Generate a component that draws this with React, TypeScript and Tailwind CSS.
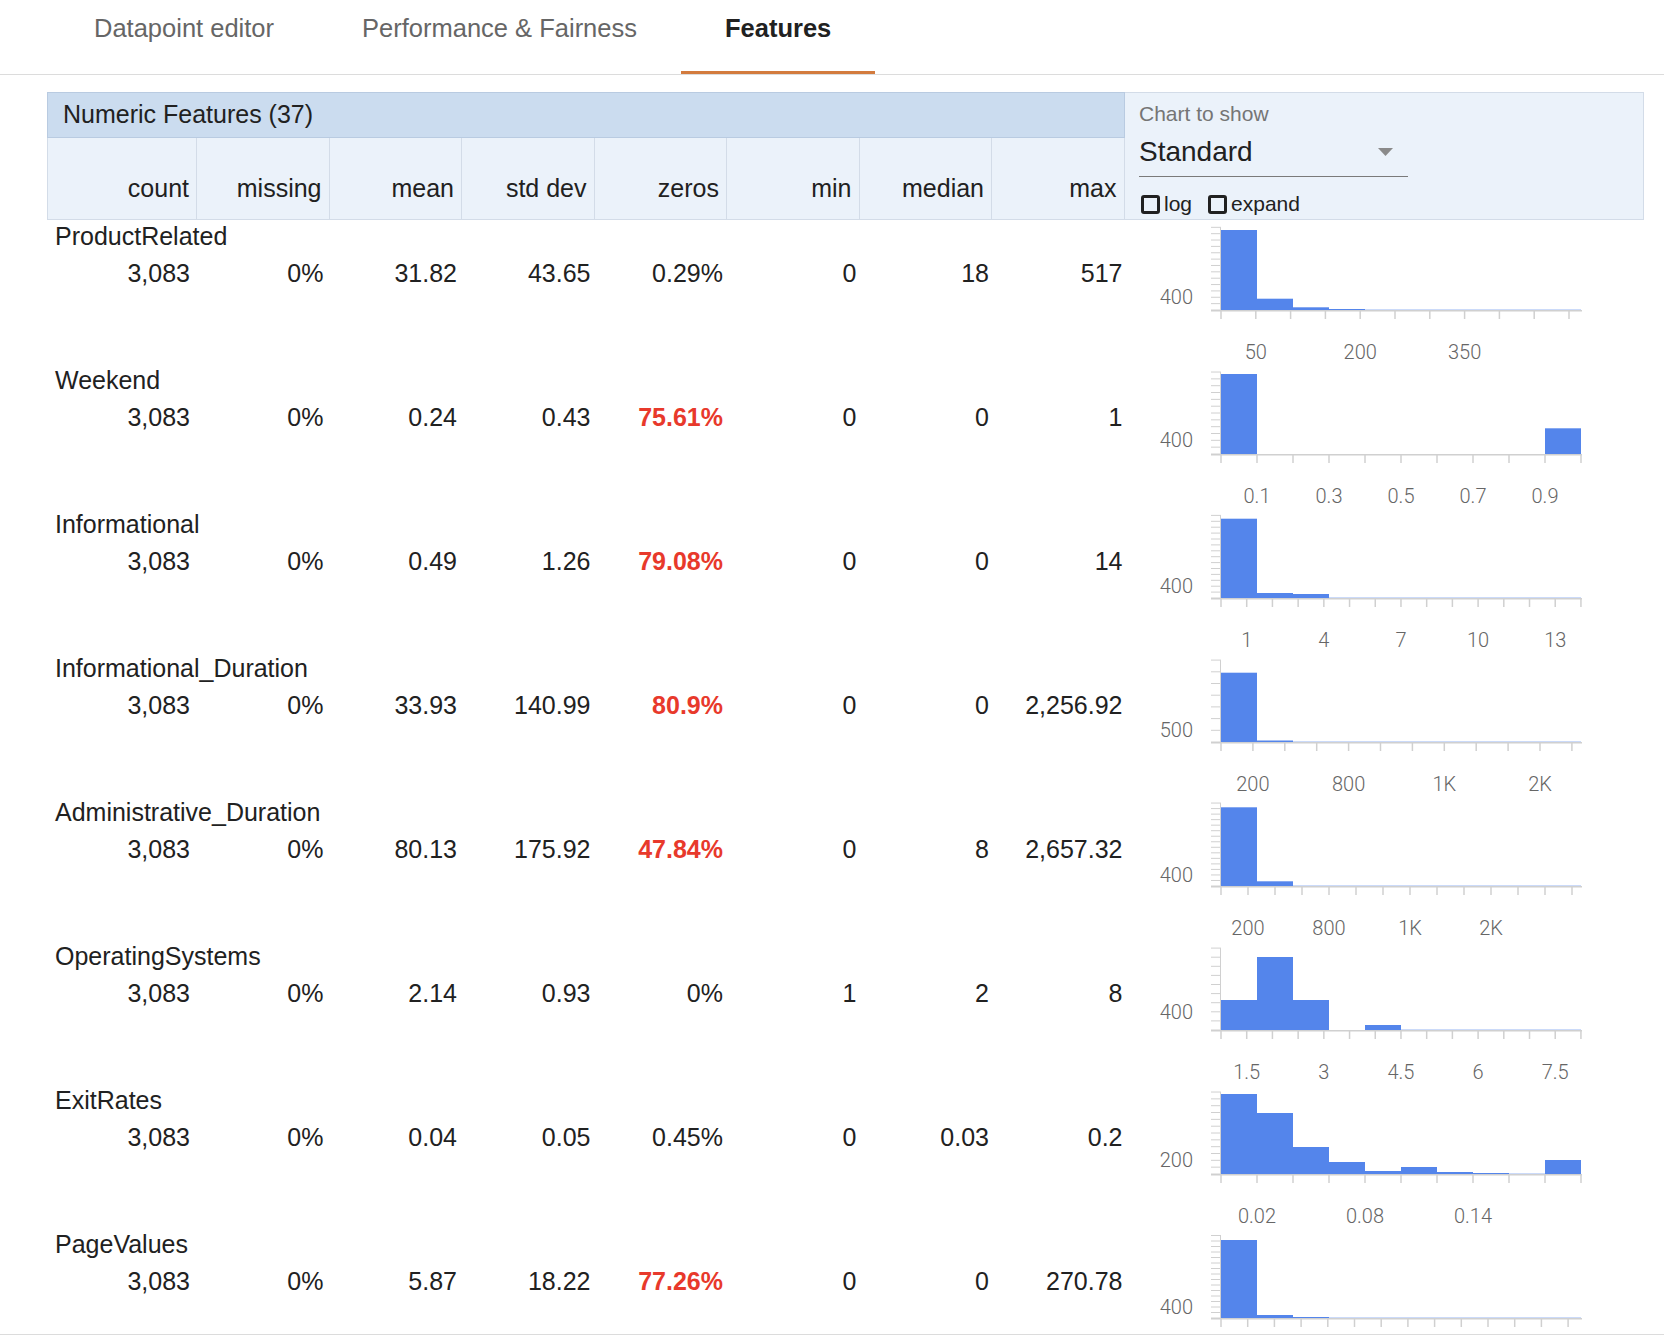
import React from 'react';

type Chart = {
  bars: number[];
  yCount: number;
  ySpace: number;
  yLabel: string;
  yLabelAt: number;
  xCount: number;
  xSpace: number;
  xLabels: Record<number, string>;
};

type Row = {
  name: string;
  values: string[];
  chart: Chart;
};

const tiny = 0.6;

const rows: Row[] = [
  {
    name: 'ProductRelated',
    values: ['3,083', '0%', '31.82', '43.65', '0.29%', '0', '18', '517'],
    chart: { bars: [80, 11.3, 2.7, 1, tiny, tiny, tiny, tiny, tiny, tiny], yCount: 13, ySpace: 6.36, yLabel: '400', yLabelAt: 2, xCount: 11, xSpace: 34.8, xLabels: { 1: '50', 4: '200', 7: '350' } },
  },
  {
    name: 'Weekend',
    values: ['3,083', '0%', '0.24', '0.43', '75.61%', '0', '0', '1'],
    chart: { bars: [80, 0, 0, 0, 0, 0, 0, 0, 0, 25.7], yCount: 12, ySpace: 6.83, yLabel: '400', yLabelAt: 2, xCount: 11, xSpace: 36, xLabels: { 1: '0.1', 3: '0.3', 5: '0.5', 7: '0.7', 9: '0.9' } },
  },
  {
    name: 'Informational',
    values: ['3,083', '0%', '0.49', '1.26', '79.08%', '0', '0', '14'],
    chart: { bars: [79.3, 5, 4, tiny, tiny, tiny, tiny, tiny, tiny, tiny], yCount: 14, ySpace: 5.9, yLabel: '400', yLabelAt: 2, xCount: 15, xSpace: 25.71, xLabels: { 1: '1', 4: '4', 7: '7', 10: '10', 13: '13' } },
  },
  {
    name: 'Informational_Duration',
    values: ['3,083', '0%', '33.93', '140.99', '80.9%', '0', '0', '2,256.92'],
    chart: { bars: [69.3, 1.5, tiny, tiny, tiny, tiny, tiny, tiny, tiny, tiny], yCount: 7, ySpace: 11.7, yLabel: '500', yLabelAt: 1, xCount: 12, xSpace: 31.9, xLabels: { 1: '200', 4: '800', 7: '1K', 10: '2K' } },
  },
  {
    name: 'Administrative_Duration',
    values: ['3,083', '0%', '80.13', '175.92', '47.84%', '0', '8', '2,657.32'],
    chart: { bars: [78.7, 4.7, tiny, tiny, tiny, tiny, tiny, tiny, tiny, tiny], yCount: 15, ySpace: 5.53, yLabel: '400', yLabelAt: 2, xCount: 14, xSpace: 27, xLabels: { 1: '200', 4: '800', 7: '1K', 10: '2K' } },
  },
  {
    name: 'OperatingSystems',
    values: ['3,083', '0%', '2.14', '0.93', '0%', '1', '2', '8'],
    chart: { bars: [30, 73, 30, 0, 5, tiny, tiny, tiny, tiny, tiny], yCount: 9, ySpace: 9.1, yLabel: '400', yLabelAt: 2, xCount: 15, xSpace: 25.71, xLabels: { 1: '1.5', 4: '3', 7: '4.5', 10: '6', 13: '7.5' } },
  },
  {
    name: 'ExitRates',
    values: ['3,083', '0%', '0.04', '0.05', '0.45%', '0', '0.03', '0.2'],
    chart: { bars: [80, 61, 27, 12, 3, 7, 2, 1, tiny, 14], yCount: 12, ySpace: 6.83, yLabel: '200', yLabelAt: 2, xCount: 11, xSpace: 36, xLabels: { 1: '0.02', 4: '0.08', 7: '0.14' } },
  },
  {
    name: 'PageValues',
    values: ['3,083', '0%', '5.87', '18.22', '77.26%', '0', '0', '270.78'],
    chart: { bars: [78, 3, 1, tiny, tiny, tiny, tiny, tiny, tiny, tiny], yCount: 15, ySpace: 5.5, yLabel: '400', yLabelAt: 2, xCount: 14, xSpace: 26.7, xLabels: {} },
  },
];

const columns = ['count', 'missing', 'mean', 'std dev', 'zeros', 'min', 'median', 'max'];

// per-column right padding of the value cells
const valuePad = ['pr-[7px]', 'pr-[6px]', 'pr-[5px]', 'pr-[4px]', 'pr-[4px]', 'pr-[3px]', 'pr-[3px]', 'pr-[2px]'];

// red highlight for zero-heavy features
const isHighZeros = (v: string) => parseFloat(v) > 10;

const Histogram: React.FC<{ chart: Chart }> = ({ chart }) => {
  const ax = 96;
  const by = 90;
  const binW = 36;
  const top = by - chart.yCount * chart.ySpace;
  const yTicks = Array.from({ length: chart.yCount + 1 }, (_, k) => by - k * chart.ySpace);
  const xTicks = Array.from({ length: chart.xCount }, (_, k) => ax + k * chart.xSpace);

  return (
    <svg width={519} height={144} className="block shrink-0">
      {yTicks.map((y, i) => (
        <line key={i} x1={86} x2={ax} y1={y} y2={y} stroke="#d0d0d0" strokeWidth={1} />
      ))}
      <line x1={ax - 0.5} x2={ax - 0.5} y1={top} y2={by} stroke="#d0d0d0" strokeWidth={1} />
      {chart.bars.map((h, i) =>
        h > 0 ? (
          <rect
            key={i}
            x={ax + i * binW}
            y={by - Math.max(h, 1)}
            width={binW}
            height={Math.max(h, 1)}
            fill="#5485eb"
            opacity={h < 1 ? 0.3 : 1}
          />
        ) : null
      )}
      <line x1={ax - 10} x2={ax + 10 * binW + 1} y1={by + 0.75} y2={by + 0.75} stroke="#d0d0d0" strokeWidth={1.5} />
      {xTicks.map((x, i) => (
        <line key={i} x1={x} x2={x} y1={by} y2={by + 9} stroke="#d0d0d0" strokeWidth={1.5} />
      ))}
      <text
        x={68}
        y={by - chart.yLabelAt * chart.ySpace}
        textAnchor="end"
        dominantBaseline="central"
        fill="#666"
        fontSize={20}
        fontWeight={300}
        fontFamily="Roboto, 'Liberation Sans', sans-serif"
      >
        {chart.yLabel}
      </text>
      {Object.entries(chart.xLabels).map(([k, label]) => (
        <text
          key={k}
          x={ax + Number(k) * chart.xSpace}
          y={by + 42}
          textAnchor="middle"
          dominantBaseline="central"
          fill="#666"
          fontSize={20}
          fontWeight={300}
          fontFamily="Roboto, 'Liberation Sans', sans-serif"
        >
          {label}
        </text>
      ))}
    </svg>
  );
};

const App: React.FC = () => {
  return (
    <div className="h-[1338px] flex flex-col bg-white text-[#212121] font-['Liberation_Sans',Arial,sans-serif] overflow-hidden">
      {/* Tabs */}
      <div className="h-[75px] shrink-0 border-b border-[#dcdcdc] flex pl-[50px]">
        <div className="px-[44px] pt-[13px] text-[25.5px] leading-[30px] text-[#666]">Datapoint editor</div>
        <div className="px-[44px] pt-[13px] text-[25.5px] leading-[30px] text-[#666]">Performance &amp; Fairness</div>
        <div className="relative px-[44px] pt-[13px] text-[25.5px] leading-[30px] font-bold text-[#212121]">
          Features
          <div className="absolute left-0 right-0 bottom-0 h-[3px] bg-[#d37b3e]" />
        </div>
      </div>

      <div className="flex-1 min-h-0 overflow-hidden border-b border-[#dcdcdc] mb-[3px] pt-[17px] pl-[47px]">
        {/* Header */}
        <div className="flex">
          <div className="w-[1078px]">
            <div className="h-[46px] bg-[#cbdcef] border border-[#b9cbe1] flex items-center pl-[15px] text-[25px]">
              Numeric Features (37)
            </div>
            <div className="h-[82px] bg-[#ebf2fa] border-b border-l border-[#d3dce8] grid grid-cols-[149px_repeat(7,132.5px)]">
              {columns.map((c) => (
                <div key={c} className="border-r border-[#d3dce8] flex items-end justify-end pr-[7px] pb-[16px] text-[25px] leading-[30px]">
                  {c}
                </div>
              ))}
            </div>
          </div>
          <div className="w-[519px] h-[128px] bg-[#ebf2fa] border border-l-0 border-[#d3dce8] pl-[14px] pt-[8px]">
            <div className="text-[21px] leading-[26px] text-[#757575]">Chart to show</div>
            <div className="mt-[8px] w-[269px] h-[42px] border-b border-[#7a7a7a] flex items-center justify-between pr-[15px]">
              <span className="text-[28px] leading-[34px] -mt-[8px]">Standard</span>
              <svg width="15" height="8" className="-mt-[8px]">
                <polygon points="0,0 15,0 7.5,8" fill="#8a8a8a" />
              </svg>
            </div>
            <div className="mt-[15px] flex items-center text-[21px] leading-[24px]">
              <span className="w-[19px] h-[19px] border-[3px] border-[#212121] rounded-[3px] ml-[2px]" />
              <span className="ml-[4px]">log</span>
              <span className="w-[19px] h-[19px] border-[3px] border-[#212121] rounded-[3px] ml-[16px]" />
              <span className="ml-[4px]">expand</span>
            </div>
          </div>
        </div>

        {/* Rows */}
        <div className="flex flex-col">
          {rows.map((r) => (
            <div key={r.name} className="flex h-[144px] shrink-0">
              <div className="w-[1078px]">
                <div className="h-[32px] pl-[8px] text-[25px] leading-[32px]">{r.name}</div>
                <div className="mt-[5px] grid grid-cols-[150px_repeat(7,132.5px)] text-[25px] leading-[32px]">
                  {r.values.map((v, i) => (
                    <div
                      key={i}
                      className={
                        i === 4 && isHighZeros(v)
                          ? `text-right ${valuePad[i]} font-bold text-[#e8392b]`
                          : `text-right ${valuePad[i]}`
                      }
                    >
                      {v}
                    </div>
                  ))}
                </div>
              </div>
              <Histogram chart={r.chart} />
            </div>
          ))}
        </div>
      </div>
    </div>
  );
};

export default App;
